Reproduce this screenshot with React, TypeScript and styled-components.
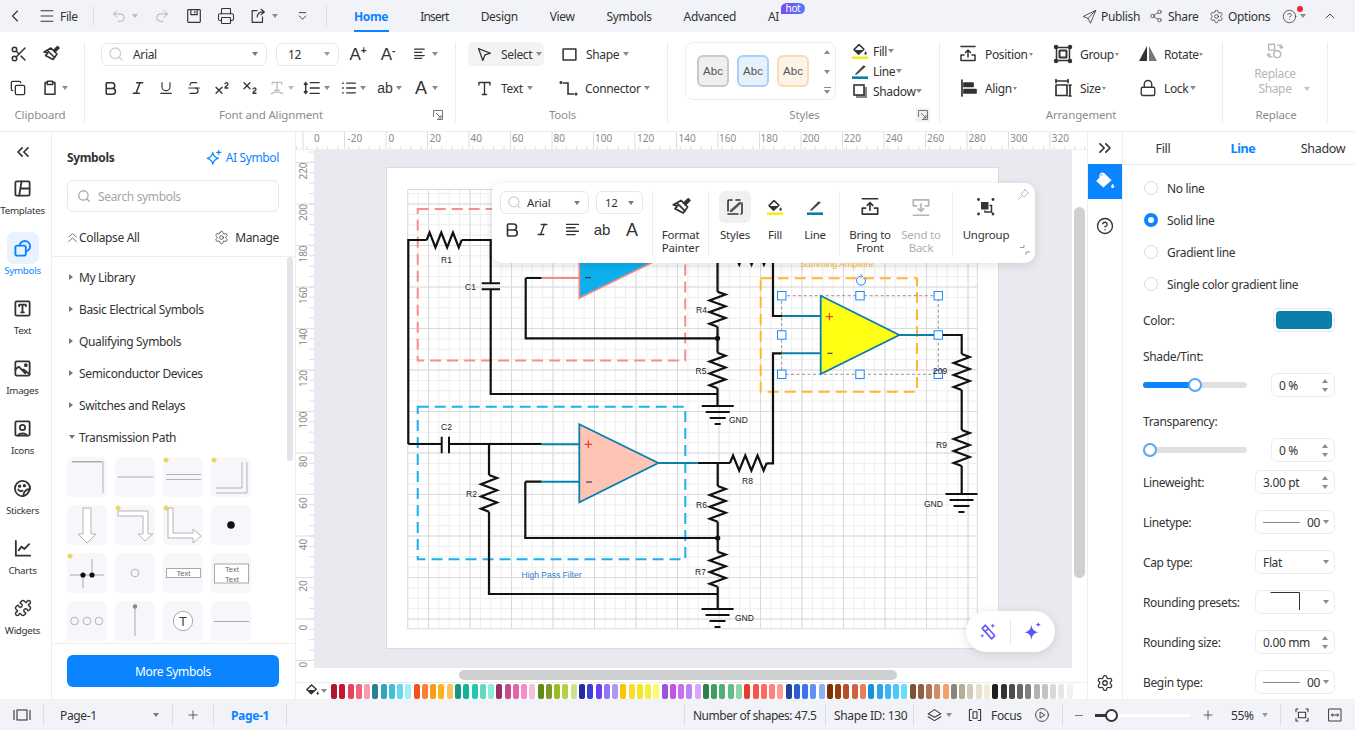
import React from "react";
import styled, { createGlobalStyle } from "styled-components";
import {
  ChevronLeft, ChevronUp, ChevronsLeft, ChevronsRight, Undo2, Redo2, Printer, Scissors, Copy, Search, Bold, Italic,
  Underline, Strikethrough, Superscript, Subscript, Plus, Minus, Settings, Share2, CircleHelp, Lock, Puzzle, Menu,
} from "lucide-react";

const FONT = `"Noto Sans", "Open Sans", sans-serif`;
const BLUE = "#0a84ff";
const INK = "#333";

const Global = createGlobalStyle`
  * { box-sizing: border-box; }
  html, body { margin: 0; padding: 0; overflow: hidden; background: #fff; }
  body { font-family: ${FONT}; font-size: 12px; letter-spacing: -0.35px; color: ${INK}; }
`;

const Shell = styled.div`display:flex;flex-direction:column;width:1355px;height:730px;overflow:hidden;`;

/* generic cells */
const Cell = styled.div<{ $w: number; $ml?: number; $start?: boolean }>`
  display:flex;align-items:center;justify-content:${p => (p.$start ? "flex-start" : "center")};flex:none;white-space:nowrap;
  width:${p => p.$w}px;margin-left:${p => p.$ml || 0}px;
`;
const CaretMark = styled.i<{ $ml?: number; $c?: string }>`
  flex:none;display:block;width:0;height:0;margin-left:${p => p.$ml || 0}px;
  border-left:3px solid transparent;border-right:3px solid transparent;border-top:4px solid ${p => p.$c || "#8b8b8b"};
`;
const Caret = ({ ml, c }: { ml?: number; c?: string }) => (
  <Cell $w={8} $ml={ml}><CaretMark $c={c} /></Cell>
);
const Ic = ({ s = 20, children, c = INK, sw = 1.5 }: { s?: number; children: React.ReactNode; c?: string; sw?: number }) => (
  <svg width={s} height={s} viewBox="0 0 20 20" fill="none" stroke={c} strokeWidth={sw} strokeLinecap="round" strokeLinejoin="round">{children}</svg>
);
const Glyph = styled.span<{ $size?: number; $c?: string }>`
  font-family:"Liberation Sans",sans-serif;font-size:${p => p.$size || 18}px;color:${p => p.$c || INK};line-height:1;letter-spacing:0;
  sup{font-size:10px;vertical-align:6px;line-height:0;font-weight:700;}
`;

/* top bar */
const TopBar = styled.header`display:flex;align-items:center;flex:none;height:32px;background:#f2f3f8;`;
const VSep = styled.span<{ $ml?: number; $h?: number }>`
  flex:none;width:1px;height:${p => p.$h || 20}px;background:#dedfe4;margin-left:${p => p.$ml || 0}px;
`;
const TabItem = styled.div<{ $on?: boolean; $tight?: boolean }>`
  position:relative;display:flex;align-items:center;height:32px;margin:0 16px;color:${p => (p.$on ? BLUE : INK)};font-weight:${p => (p.$on ? 700 : 400)};
  ${p => p.$tight && "letter-spacing:-0.8px;"}
  ${p => p.$on && `&::after{content:"";position:absolute;left:0;right:-1px;bottom:0;height:2px;background:${BLUE};}`}
`;
const HotBadge = styled.span`
  position:absolute;left:13px;top:3px;width:24px;height:11px;border-radius:6px 6px 6px 0;background:linear-gradient(90deg,#7d4bf2,#4c7df7);
  color:#fff;font-size:10px;line-height:10px;text-align:center;
`;
const TopRight = styled.div`display:flex;align-items:center;align-self:stretch;margin-left:auto;position:relative;`;
const RedDot = styled.span`position:absolute;left:216px;top:6px;width:6px;height:6px;border-radius:50%;background:#f5222d;`;

/* ribbon */
const Ribbon = styled.section`display:flex;flex:none;height:100px;background:#fff;border-bottom:1px solid #eee;padding-top:10px;`;
const Group = styled.div<{ $w: number; $noLine?: boolean }>`
  display:flex;flex-direction:column;flex:none;width:${p => p.$w}px;height:80px;
  ${p => !p.$noLine && "border-right:1px solid #ececec;"}
`;
const GroupBody = styled.div`flex:none;height:65px;display:flex;flex-direction:column;gap:10px;`;
const GroupBodyRow = styled.div`flex:none;height:65px;display:flex;`;
const GroupLabel = styled.div<{ $pl?: number; $pr?: number }>`
  display:grid;grid-template-columns:1fr auto 1fr;align-items:center;height:15px;color:#8c8c8c;letter-spacing:-0.15px;font-size:11.5px;
  padding-left:${p => p.$pl || 0}px;padding-right:${p => p.$pr || 0}px;
`;
const Launcher = styled.span<{ $on?: boolean; $mr: number }>`
  grid-column:3;justify-self:end;display:flex;margin-right:${p => p.$mr}px;width:14px;height:14px;align-items:center;justify-content:center;
  ${p => p.$on && "background:#f0f0f0;"}
`;
const LauncherIcon = () => (
  <svg width="10" height="10" viewBox="0 0 10 10" fill="none" stroke="#777" strokeWidth="1"><path d="M.5 7V.5H9.5V9.5H4M3 3L8 8M8 5V8H5" /></svg>
);
const Row = styled.div`display:flex;align-items:center;height:24px;flex:none;`;
const SelectBox = styled.div<{ $w: number; $ml?: number; $h?: number }>`
  display:flex;align-items:center;flex:none;width:${p => p.$w}px;height:${p => p.$h || 23}px;margin-left:${p => p.$ml || 0}px;
  border:1px solid #e8e8e8;border-radius:6px;padding:0 8px 0 6px;color:${INK};
`;
const SelectText = styled.span<{ $ml?: number }>`flex:1;margin-left:${p => p.$ml || 0}px;`;

const ToolGrid = styled.div<{ $cols: string; $ml: number }>`
  display:grid;grid-template-columns:${p => p.$cols};grid-auto-rows:24px;column-gap:0;row-gap:10px;margin-left:${p => p.$ml}px;
`;
const ToolItem = styled.div<{ $on?: boolean; $pad?: number; $gap?: number; $w?: number }>`
  display:flex;align-items:center;height:24px;padding-left:${p => p.$pad ?? 0}px;gap:${p => p.$gap ?? 8}px;border-radius:5px;white-space:nowrap;
  ${p => p.$w && `width:${p.$w}px;`}
  ${p => p.$on && "background:#f3f3f3;"}
  > svg{flex:none;}
`;
const MiniCaret = styled(CaretMark)`margin-left:-4px;`;
const ArrCaret = styled(CaretMark)`margin-left:-6px;border-left-width:2.5px;border-right-width:2.5px;border-top-width:3px;`;
const StyleBox = styled.div`
  display:flex;align-items:center;flex:none;margin-left:17px;width:151px;height:58px;border:1px solid #eee;border-radius:8px;padding-left:11px;gap:8px;
`;
const AbcTile = styled.div<{ $bg: string; $bd: string }>`
  flex:none;display:flex;align-items:center;justify-content:center;width:32px;height:32px;border-radius:6px;
  background:${p => p.$bg};border:2px solid ${p => p.$bd};color:#555;font-size:11.5px;font-family:"Liberation Sans",sans-serif;letter-spacing:0;
`;
const StyleArrows = styled.div`flex:none;margin-left:auto;width:16px;height:100%;display:flex;flex-direction:column;align-items:center;justify-content:space-between;padding:7px 0 5px;margin-right:0;`;
const UpMark = styled.i`display:block;width:0;height:0;border-left:3.5px solid transparent;border-right:3.5px solid transparent;border-bottom:4px solid #8b8b8b;`;
const DownMark = styled.i`display:block;width:0;height:0;border-left:3.5px solid transparent;border-right:3.5px solid transparent;border-top:4px solid #8b8b8b;`;
const MoreMark = styled(DownMark)`position:relative;&::before{content:"";position:absolute;left:-3.5px;top:-7px;width:7px;height:1px;background:#8b8b8b;}`;
const MiniList = styled.div`flex:none;margin-left:16px;display:flex;flex-direction:column;margin-top:-1px;`;
const MiniRow = styled.div`display:flex;align-items:center;height:20px;gap:5px;white-space:nowrap;`;
const ReplaceCol = styled.div`display:flex;flex-direction:column;align-items:center;height:65px;color:#b5b5b5;line-height:15px;text-align:center;`;
const ReplaceIconWrap = styled.div`height:24px;flex:none;`;
const ReplaceLine = styled.div`display:grid;grid-template-columns:1fr auto 1fr;width:100%;align-items:center;`;
const ReplaceCaret = styled(CaretMark)`margin-left:12px;`;
const Bucket = ({ bar }: { bar: string }) => (
  <svg width="16" height="16" viewBox="0 0 16 16" fill="none">
    <path d="M7 1.6L2 6.6L6.6 11.2L12 6.2Z" stroke="#333" strokeWidth="1.5" strokeLinejoin="round" />
    <path d="M2.6 7H11.6L6.6 11.2Z" fill="#333" />
    <path d="M13.6 8.2c.9 1.3 1.2 1.8 1.2 2.3a1.2 1.2 0 0 1-2.4 0c0-.5.3-1 1.2-2.3z" fill="#333" />
    <rect x="0" y="13.4" width="16" height="2.6" fill={bar} />
  </svg>
);
const Pen = ({ bar }: { bar: string }) => (
  <svg width="16" height="16" viewBox="0 0 16 16" fill="none">
    <path d="M2.6 11.6L11.6 2.2L13.8 3.4L5 11.6Z" fill="#444" />
    <rect x="0" y="13.4" width="16" height="2.6" fill={bar} />
  </svg>
);
const FrontIcon = ({ c = INK, down, s = 20 }: { c?: string; down?: boolean; s?: number }) => (
  <Ic s={s} c={c} sw={1.5}>
    {down ? <path d="M3 17.5H17M10 7V14M7.5 11.5L10 14L12.5 11.5M6 9H3V3.5H17V9H14" /> : <path d="M3 2.5H17M10 13V6M7.5 8.5L10 6L12.5 8.5M6 11H3V16.5H17V11H14" />}
  </Ic>
);
const GroupIcon = ({ s = 20 }: { s?: number }) => (
  <Ic s={s} sw={1.5}>
    <rect x="3.5" y="3.5" width="13" height="13" rx="0.5" />
    <rect x="6.5" y="6.5" width="7" height="7" rx="0.5" fill="#fff" strokeWidth={2} />
    <circle cx="3" cy="3" r="1.5" fill={INK} /><circle cx="17" cy="3" r="1.5" fill={INK} /><circle cx="3" cy="17" r="1.5" fill={INK} /><circle cx="17" cy="17" r="1.5" fill={INK} />
  </Ic>
);
const FormatBrush = ({ s = 20 }: { s?: number }) => (
  <Ic s={s} sw={1.6}>
    <path d="M10 4L16 10L12 15.5L4.5 11.5L7 9L3 8Z" fill="#fff" />
    <path d="M12.5 6.5L16.5 2.5L18 4L14 8" fill={INK} />
    <path d="M6.5 6.5L13.5 13.5" />
  </Ic>
);

/* body */
const Main = styled.main`display:flex;flex:1;min-height:0;`;
const LeftRail = styled.nav`display:flex;flex-direction:column;align-items:flex-start;flex:none;width:52px;border-right:1px solid #eee;`;
const RailTop = styled.div`height:40px;width:46px;flex:none;display:flex;align-items:center;justify-content:center;`;
const RailItem = styled.div<{ $on?: boolean }>`
  display:flex;flex-direction:column;align-items:center;flex:none;height:60px;width:45px;color:${p => (p.$on ? BLUE : INK)};
  font-size:9.8px;line-height:14px;letter-spacing:-0.3px;
`;
const RailIcon = styled.div<{ $on?: boolean }>`
  display:flex;align-items:center;justify-content:center;width:32px;height:32px;border-radius:7px;${p => p.$on && "background:#e8f3ff;"}
`;

const SymbolPanel = styled.aside`display:flex;flex-direction:column;flex:none;width:244px;border-right:1px solid #eee;`;
const SymHead = styled.div`flex:none;display:flex;align-items:center;justify-content:space-between;height:48px;padding:2px 16px 0 15px;`;
const SymTitle = styled.span`font-weight:700;`;
const AiLink = styled.span`display:flex;align-items:center;gap:3px;color:${BLUE};`;
const SearchBox = styled.div`
  flex:none;display:flex;align-items:center;gap:7px;margin:0 16px 0 15px;height:32px;border:1px solid #e8e8e8;border-radius:6px;padding-left:9px;color:#a6a6a6;
`;
const CollapseRow = styled.div`
  flex:none;display:flex;align-items:center;justify-content:space-between;height:45px;padding:6px 16px 0 15px;border-bottom:1px solid #eee;
`;
const CollapseSide = styled.span<{ $gap?: number }>`display:flex;align-items:center;gap:${p => p.$gap ?? 3}px;`;
const SymScroll = styled.div`flex:1;min-height:0;overflow:hidden;position:relative;padding:4px 0 0 15px;`;
const ScrollThumb = styled.div`position:absolute;right:2px;top:0;width:6px;height:204px;border-radius:3px;background:#e3e3e9;`;
const LibRow = styled.div`display:flex;align-items:center;height:32px;gap:4px;`;
const Arrow = styled.i<{ $open?: boolean }>`
  display:block;flex:none;width:0;height:0;margin-left:2px;
  ${p => (p.$open
    ? "border-left:3.5px solid transparent;border-right:3.5px solid transparent;border-top:4.5px solid #777;"
    : "border-top:3.5px solid transparent;border-bottom:3.5px solid transparent;border-left:4.5px solid #777;margin-right:2px;")}
`;
const TileGrid = styled.div`display:grid;grid-template-columns:repeat(4,40px);grid-auto-rows:40px;gap:8px;padding-top:4px;`;
const TileBox = styled.div`width:40px;height:40px;border-radius:6px;background:#f6f7fb;`;
const SymFoot = styled.div`flex:none;height:56px;border-top:1px solid #eee;padding:11px 16px 12px 15px;`;
const MoreBtn = styled.div`display:flex;align-items:center;justify-content:center;height:32px;border-radius:6px;background:${BLUE};color:#fff;`;

const Tile = ({ children, mark }: { children?: React.ReactNode; mark?: boolean }) => (
  <TileBox>
    <svg width="40" height="40" viewBox="0 0 40 40" fill="none" stroke="#b5b5b5" style={{ overflow: "visible", display: "block" }}>
      {children}
      {mark && <path d="M3 .5L5.5 3L3 5.5L.5 3Z" fill="#fbd84a" stroke="#c9a93a" strokeWidth=".5" />}
    </svg>
  </TileBox>
);
const TileText = styled.text`font-family:"Liberation Sans",sans-serif;font-size:7.5px;fill:#666;stroke:none;letter-spacing:0;`;

/* centre */
const CanvasCol = styled.section`display:flex;flex-direction:column;flex:none;width:791px;`;
const RulerWrap = styled.div`flex:none;height:18px;background:#fff;`;
const CanvasMid = styled.div`display:flex;flex:1;min-height:0;`;
const VRulerWrap = styled.div`flex:none;width:18px;background:#fff;overflow:hidden;`;
const Stage = styled.div`position:relative;flex:1;min-width:0;background:#e9e9ef;overflow:hidden;`;
const VBar = styled.div`flex:none;width:15px;background:#fff;padding:57px 2px 0;`;
const VThumb = styled.div`width:11px;height:371px;border-radius:6px;background:#cfd0d2;`;
const Page = styled.div`width:611px;height:480px;margin:18px 0 0 73px;background:#fff;box-shadow:0 0 0 1px #dcdcdf;`;
const HBar = styled.div`flex:none;height:15px;background:#fff;border-bottom:1px solid #eee;padding:2px 0 0 163px;`;
const HThumb = styled.div`width:438px;height:10px;border-radius:5px;background:#cfd0d2;`;
const ColorBar = styled.div`flex:none;height:16px;background:#fff;display:flex;align-items:center;`;
const FillCell = styled.div`flex:none;width:35px;display:flex;align-items:center;justify-content:flex-end;padding-right:4px;gap:1px;`;
const Swatches = styled.div`display:flex;gap:2.28px;`;
const Swatch = styled.i<{ $c: string }>`display:block;width:6px;height:15px;border-radius:2px;background:${p => p.$c};`;

/* floating toolbar */
const FloatBar = styled.div`
  position:absolute;left:178px;top:33px;width:543px;height:80px;display:flex;padding-top:8px;background:#fff;border-radius:10px;
  box-shadow:0 2px 10px rgba(0,0,0,.12);font-size:11.5px;letter-spacing:-0.22px;
`;
const FloatFont = styled.div`flex:none;width:160px;padding-left:8px;display:flex;flex-direction:column;gap:4px;`;
const FloatRow = styled.div`display:flex;align-items:center;height:23px;`;
const FloatSep = styled.span<{ $ml?: number }>`flex:none;width:1px;height:64px;background:#ececec;margin-left:${p => p.$ml || 0}px;`;
const FloatItem = styled.div<{ $w: number; $dim?: boolean; $ml?: number }>`
  flex:none;width:${p => p.$w}px;margin-left:${p => p.$ml || 0}px;display:flex;flex-direction:column;align-items:center;color:${p => (p.$dim ? "#b0b0b0" : INK)};
`;
const FloatIcon = styled.div<{ $on?: boolean }>`
  flex:none;width:32px;height:32px;display:flex;align-items:center;justify-content:center;border-radius:6px;${p => p.$on && "background:#f0f0f0;"}
`;
const FloatText = styled.div`margin-top:5px;line-height:13px;text-align:center;`;
const PinMark = styled.div`position:absolute;right:5px;top:5px;`;
const CornerMark = styled.div`position:absolute;right:5px;bottom:5px;`;
const AiPill = styled.div`
  position:absolute;right:17px;bottom:16px;width:89px;height:41px;border-radius:21px;background:#fff;box-shadow:0 2px 10px rgba(0,0,0,.12);
  display:flex;align-items:center;justify-content:space-around;padding:0 6px;
`;
const PillSep = styled.span`width:1px;height:24px;background:#e6e6e6;`;

/* right side */
const RightRail = styled.nav`display:flex;flex-direction:column;flex:none;width:36px;border-left:1px solid #eee;border-right:1px solid #eee;`;
const RRBtn = styled.div<{ $h: number; $on?: boolean }>`
  flex:none;display:flex;align-items:center;justify-content:center;height:${p => p.$h}px;${p => p.$on && `background:${BLUE};`}
`;
const RRBottom = styled(RRBtn)`margin-top:auto;`;
const RightPanel = styled.aside`flex:1;min-width:0;overflow:hidden;display:flex;flex-direction:column;`;
const PTabs = styled.div`flex:none;display:flex;height:33px;padding-top:1px;border-bottom:1px solid #eee;`;
const PTab = styled.div<{ $on?: boolean }>`
  flex:none;width:80px;display:flex;align-items:center;justify-content:center;font-size:12.5px;${p => p.$on && `color:${BLUE};font-weight:700;`}
`;
const PBody = styled.div`flex:1;min-height:0;overflow:hidden;padding:7px 20px 0;display:flex;flex-direction:column;`;
const RadioRow = styled.div`flex:none;display:flex;align-items:center;height:32px;gap:9px;padding-left:1px;`;
const Radio = styled.i<{ $on?: boolean }>`
  flex:none;display:block;width:14px;height:14px;border-radius:50%;
  ${p => (p.$on ? `background:#fff;border:4px solid ${BLUE};` : "border:1px solid #ddd;background:#fff;")}
`;
const FieldRow = styled.div<{ $mt?: number; $h?: number }>`
  flex:none;display:flex;align-items:center;justify-content:space-between;height:${p => p.$h || 24}px;margin-top:${p => p.$mt || 0}px;
`;
const ColorWell = styled.div`flex:none;width:62px;height:24px;padding:2px;border:1px solid #e8e8e8;border-radius:5px;`;
const ColorFill = styled.div`width:100%;height:100%;border-radius:4px;background:#0a7fae;`;
const Track = styled.div`position:relative;flex:none;width:104px;height:6px;border-radius:3px;background:#e0e0e0;`;
const TrackFill = styled.div<{ $pct: number }>`width:${p => p.$pct}%;height:100%;border-radius:3px;background:${BLUE};`;
const Knob = styled.i<{ $pct: number }>`
  position:absolute;top:-4px;left:calc(${p => p.$pct}% - 7px + ${p => (p.$pct ? 0 : 7)}px);display:block;width:14px;height:14px;border-radius:50%;background:#fff;border:2px solid #5aa6f5;
`;
const Field = styled.div<{ $w: number }>`
  flex:none;display:flex;align-items:center;width:${p => p.$w}px;height:24px;border:1px solid #ececec;border-radius:6px;padding:0 5px 0 7px;
`;
const FieldText = styled.span`flex:1;white-space:nowrap;`;
const SpinCol = styled.div`display:flex;flex-direction:column;gap:5px;flex:none;margin-right:1px;`;
const LineSample = styled.span<{ $w: number }>`flex:none;display:block;width:${p => p.$w}px;height:1px;background:#888;margin-right:7px;`;
const Spin = () => (<SpinCol><UpMark /><DownMark /></SpinCol>);

/* status */
const StatusBar = styled.footer`display:flex;align-items:center;flex:none;height:31px;padding-top:1px;background:#f2f3f8;`;
const PageTab = styled.span`color:${BLUE};font-weight:700;`;
const ShapeCount = styled.span`letter-spacing:-0.5px;`;
const ZoomTrack = styled.div`position:relative;flex:none;width:96px;height:3px;background:#fff;margin-left:10px;`;
const ZoomFill = styled.div`width:14px;height:3px;background:#333;`;
const ZoomKnob = styled.i`position:absolute;left:10px;top:-5px;display:block;width:13px;height:13px;border-radius:50%;background:#fff;border:2px solid #333;`;

/* drawing */
const hRes = (a: number, b: number, y: number, amp = 7.5) => {
  const w = b - a; const pts = [`${a},${y}`];
  for (let i = 0; i < 6; i++) pts.push(`${a + (w * (i + 0.5)) / 6},${y + (i % 2 ? amp : -amp)}`);
  pts.push(`${b},${y}`); return `M${pts.join("L")}`;
};
const vRes = (a: number, b: number, x: number, amp = 8) => {
  const w = b - a; const pts = [`${x},${a}`];
  for (let i = 0; i < 6; i++) pts.push(`${x + (i % 2 ? -amp : amp)},${a + (w * (i + 0.5)) / 6}`);
  pts.push(`${x},${b}`); return `M${pts.join("L")}`;
};
const ground = (cx: number, y: number) =>
  `M${cx - 16} ${y}H${cx + 16}M${cx - 12} ${y + 6}H${cx + 12}M${cx - 8} ${y + 12}H${cx + 8}M${cx - 3} ${y + 18}H${cx + 3}`;

const range = (from: number, to: number, step: number) => { const r: number[] = []; for (let v = from; v <= to + .01; v += step) r.push(v); return r; };
const DText = styled.text<{ $c?: string; $s?: number }>`
  font-family:"Liberation Sans",sans-serif;letter-spacing:0;font-size:${p => p.$s || 8.5}px;fill:${p => p.$c || "#222"};
`;
const handles: [number, number][] = [[781.7, 295.7], [860, 295.7], [938.3, 295.7], [781.7, 335], [938.3, 335], [781.7, 374.3], [860, 374.3], [938.3, 374.3]];
const Diagram = () => {
  const blue = "#0a7fae";
  const X0 = 407.75, X1 = 977.3, Y0 = 189.5, Y1 = 628.7;
  const vMinor = range(X0, X1, 10.375), hMinor = range(193.625, Y1, 10.375);
  const vMajor = range(428.5, X1, 41.5), hMajor = range(204, Y1, 41.5);
  return (
    <svg width="611" height="480" viewBox="387 168 611 480" fill="none" style={{ display: "block" }}>
      <g stroke="#eeeeee" strokeWidth="1">
        {vMinor.map(x => <line key={x} x1={x} x2={x} y1={Y0} y2={Y1} />)}
        {hMinor.map(y => <line key={y} y1={y} y2={y} x1={X0} x2={X1} />)}
      </g>
      <g stroke="#dadada" strokeWidth="1">
        {vMajor.map(x => <line key={x} x1={x} x2={x} y1={Y0} y2={Y1} />)}
        {hMajor.map(y => <line key={y} y1={y} y2={y} x1={X0} x2={X1} />)}
        <rect x={X0} y={Y0} width={X1 - X0} height={Y1 - Y0} />
      </g>
      <rect x="417.7" y="209" width="267.5" height="151.4" stroke="#f58f8f" strokeWidth="2" strokeDasharray="11 6" />
      <rect x="417.7" y="406.7" width="267.6" height="152.6" stroke="#1bb1ec" strokeWidth="2" strokeDasharray="11 6" />
      <rect x="760.7" y="278.3" width="156.3" height="113.4" stroke="#fdb92e" strokeWidth="2" strokeDasharray="11 6" />
      <g stroke="#111" strokeWidth="2.2" strokeLinejoin="miter">
        <path d="M408.3 444V240H426.7M461.7 240H490.7V283M490.7 289V394H717.5M408.3 444H441.7M449 444H541.7" />
        <path d={hRes(426.7, 461.7, 240)} />
        <path d="M481.7 283.3H500M481.7 289.3H500M441.7 436.7V453.3M449 436.7V453.3" strokeWidth="2" />
        <path d="M525.7 278H541.7M525.7 278V338.3H717.5" />
        <path d="M717.5 258V291.7M717.5 326.7V352.7M717.5 388.3V406" />
        <path d={vRes(291.7, 326.7, 717.5)} /><path d={vRes(352.7, 388.3, 717.5)} />
        <path d={hRes(730, 767, 257)} /><path d="M717.5 257H730M767 257H773V316H782M782 353.3H773V463.3H766.7" />
        <path d={ground(717.7, 406)} />
        <path d="M489 444V475M489 511.7V594H717.5" /><path d={vRes(475, 511.7, 489)} />
        <path d="M525.3 481.7H541.7M525.3 481.7V538H717.7" />
        <path d="M697.7 463H730M717.7 463V486M717.7 521.7V551.7M717.7 586.7V609" />
        <path d={hRes(730, 766.7, 463)} /><path d={vRes(486, 521.7, 717.7)} /><path d={vRes(551.7, 586.7, 717.7)} />
        <path d={ground(717.5, 609)} />
        <path d="M938 335H961.7V354M961.7 390V430M961.7 466V494" />
        <path d={vRes(354, 390, 961.7)} /><path d={vRes(430, 466, 961.7)} />
        <path d={ground(961.5, 494)} />
      </g>
      <circle cx="717.5" cy="338.3" r="2.6" fill="#111" /><circle cx="717.7" cy="538" r="2.6" fill="#111" />
      <path d="M579.3 220L659 259L579.3 298Z" fill="#0cb0ec" stroke="#f08a8a" strokeWidth="1.8" />
      <path d="M541.7 278H579" stroke="#f08a8a" strokeWidth="1.8" />
      <path d="M585 277.7H591" stroke="#222" strokeWidth="1" />
      <path d="M579.3 424.3L658.3 463L579.3 502.3Z" fill="#fec4b4" stroke={blue} strokeWidth="1.8" />
      <path d="M541.7 444.3H579M541.7 481.7H579M658.3 463H697.7" stroke={blue} strokeWidth="2" />
      <path d="M820.7 295.7L899.3 335L820.7 374Z" fill="#ffff14" stroke={blue} strokeWidth="1.8" />
      <path d="M782 316H820.7M782 353.3H820.7M899.3 335H938" stroke={blue} strokeWidth="2" />
      <path d="M584.7 444.3H592M588.3 440.6V448M825.7 316.7H833M829.3 313V320.4" stroke="#f0142d" strokeWidth="1" />
      <path d="M586 482H592M827.5 353.3H832.5" stroke="#222" strokeWidth="1" />
      <DText x="441" y="263">R1</DText>
      <DText x="465" y="290">C1</DText>
      <DText x="441" y="430">C2</DText>
      <DText x="466" y="497">R2</DText>
      <DText x="696" y="313">R4</DText>
      <DText x="695.5" y="374">R5</DText>
      <DText x="696" y="508">R6</DText>
      <DText x="695" y="575">R7</DText>
      <DText x="742" y="484">R8</DText>
      <DText x="936" y="448">R9</DText>
      <DText x="729" y="423">GND</DText>
      <DText x="735" y="621">GND</DText>
      <DText x="924" y="507">GND</DText>
      <DText x="521.5" y="577.5" $c="#2f7ed0">High Pass Filter</DText>
      <DText x="800" y="267" $c="#fdb92e" $s={8.8}>Summing Amplifire</DText>
      <rect x="781.7" y="295.7" width="156.6" height="78.6" stroke="#777" strokeWidth=".8" strokeDasharray="3 2.5" />
      {handles.map(([x, y]) => <rect key={`${x}-${y}`} x={x - 4.2} y={y - 4.2} width="8.4" height="8.4" fill="#fff" stroke="#1a86ff" strokeWidth="1" />)}
      <DText x="933" y="373.5">209</DText>
      <path d="M864.7 278A4.5 4.5 0 1 1 860.7 276.2M860.5 274.5L862.6 276.2L860.5 278" stroke="#1a86ff" strokeWidth="1" />
    </svg>
  );
};

const RulerText = styled.text`font-family:${FONT};font-size:10px;fill:#8c8a86;letter-spacing:0;`;
const HRuler = () => {
  const majors = range(303, 1087, 41.5);
  const minor = range(296.5, 1087, 10.375);
  const labels: [number, string][] = [[314, "0"], [347.5, "-20"], [388.5, "0"], [429.5, "20"], [470.5, "40"], [512, "60"], [553.5, "80"], [595, "100"], [637, "120"], [678.5, "140"]];
  range(719, 1060, 41.6).forEach((x, i) => labels.push([x, String(160 + i * 20)]));
  return (
    <svg width="791" height="18" viewBox="296 132 791 18" style={{ display: "block" }}>
      <g stroke="#dedede">
        {minor.map(x => <line key={x} x1={x} x2={x} y1={146} y2={150} />)}
        {majors.map(x => <line key={x} x1={x} x2={x} y1={132} y2={150} />)}
        <line x1="296" x2="1087" y1="149.5" y2="149.5" stroke="#eee" />
      </g>
      {labels.map(([x, t], i) => <RulerText key={i} x={x} y={142}>{t}</RulerText>)}
    </svg>
  );
};
const VRuler = () => {
  const majors = range(162.5, 668, 41.5), minor = range(152, 668, 10.375);
  const labels = range(0, 12, 1).map(i => ({ y: 171 + i * 41.5, t: String(220 - i * 20) }));
  return (
    <svg width="18" height="518" viewBox="296 150 18 518" style={{ display: "block" }}>
      <g stroke="#dedede">
        {minor.map(y => <line key={y} y1={y} y2={y} x1={309} x2={314} />)}
        {majors.map(y => <line key={y} y1={y} y2={y} x1={296} x2={314} />)}
      </g>
      {labels.map(l => (
        <RulerText key={l.y} x={303} y={l.y} textAnchor="middle" dominantBaseline="central" transform={`rotate(-90 303 ${l.y})`}>{l.t}</RulerText>
      ))}
    </svg>
  );
};

const COLORS = [
  "#a6192e", "#d0122f", "#e8415e", "#f5617f", "#f99bb0", "#287f96", "#35a3bf", "#3ec0dc", "#63d9ee", "#a5ecf7",
  "#f5511e", "#fb7f36", "#fd9a18", "#fdb318", "#fdc25a", "#139880", "#13b495", "#1ccbb0", "#65d6c1", "#8aeedd",
  "#9b2f62", "#c54b8c", "#e364ab", "#f78bcf", "#f4c2dc", "#5f8a14", "#7a9b24", "#9bbb22", "#b2d045", "#d2e08e",
  "#2129a9", "#3a3fd8", "#6c40ef", "#9476f2", "#ad98f5", "#fbc400", "#fbdc2d", "#f1e526", "#f8ed3c", "#fbfc75",
  "#9b55dd", "#c353e8", "#cd6cee", "#bb84f6", "#dba6fa", "#2d8049", "#3ca05a", "#52ae74", "#66bc87", "#90d3a8",
  "#ec3b2d", "#f6544d", "#fb6a63", "#fd8181", "#fb9c90", "#21439f", "#2e5bcf", "#3a72f0", "#6092f3", "#8ab0f5",
  "#7a3205", "#983c0a", "#b3502a", "#cf6240", "#e67f5d", "#1890dc", "#2ba4ef", "#40b4f7", "#48cbfc", "#66e0fc",
  "#7d5335", "#955e3e", "#b57350", "#d48c63", "#f3a06c", "#8a8578", "#b3ad9b", "#d0cbbb", "#e4dfcf", "#f0ecd8",
  "#1f1f1f", "#333333", "#4d4d4d", "#666666", "#808080", "#b3b3b3", "#c4c4c4", "#d9d9d9", "#e6e6e6", "#f2f2f2",
];

const Sparkle = ({ c, s = 18 }: { c: string; s?: number }) => (
  <svg width={s} height={s} viewBox="0 0 20 20" fill={c}>
    <path d="M9 3.5C9.6 8 11.5 10 16 10.8C11.5 11.5 9.6 13.5 9 18C8.4 13.5 6.5 11.5 2 10.8C6.5 10 8.4 8 9 3.5Z" />
    <path d="M15.5 1C15.7 2.6 16.4 3.3 18 3.5C16.4 3.7 15.7 4.4 15.5 6C15.3 4.4 14.6 3.7 13 3.5C14.6 3.3 15.3 2.6 15.5 1Z" />
  </svg>
);

const LIBS = ["My Library", "Basic Electrical Symbols", "Qualifying Symbols", "Semiconductor Devices", "Switches and Relays"];

export default function App() {
  return (
    <Shell>
      <Global />
      <TopBar>
        <Cell $w={30}><ChevronLeft size={20} strokeWidth={1.3} color={INK} /></Cell>
        <Cell $w={20} $ml={7}><Menu size={18} strokeWidth={1.3} color={INK} /></Cell>
        <Cell $w={17} $ml={3} $start>File</Cell>
        <VSep $ml={16} />
        <Cell $w={18} $ml={16}><Undo2 size={16} strokeWidth={1.3} color="#aaa" /></Cell>
        <Caret ml={3} c="#bbb" />
        <Cell $w={18} $ml={14}><Redo2 size={16} strokeWidth={1.3} color="#aaa" /></Cell>
        <Cell $w={20} $ml={13}>
          <Ic s={18} sw={1.3}><path d="M4 3H16A1 1 0 0 1 17 4V16A1 1 0 0 1 16 17H4A1 1 0 0 1 3 16V4A1 1 0 0 1 4 3ZM6.5 3V8.5H13.5V3M11 5V6.5" /></Ic>
        </Cell>
        <Cell $w={20} $ml={12}><Printer size={18} strokeWidth={1.4} color={INK} /></Cell>
        <Cell $w={20} $ml={12}>
          <Ic s={18} sw={1.3}><path d="M9 4H3.5V17H15V11M9 11C9.5 7.5 12 5.5 16 5.5M13.5 2.5L17 5.5L13.5 8.5" /></Ic>
        </Cell>
        <Caret ml={3} />
        <Cell $w={16} $ml={15}>
          <Ic s={11} sw={1.6}><path d="M4 3H16M4 9L10 15L16 9" /></Ic>
        </Cell>
        <VSep $ml={16} />
        <Cell $w={0} $ml={11} />
        <TabItem $on>Home</TabItem>
        <TabItem $tight>Insert</TabItem>
        <TabItem>Design</TabItem>
        <TabItem>View</TabItem>
        <TabItem>Symbols</TabItem>
        <TabItem>Advanced</TabItem>
        <TabItem>AI<HotBadge>hot</HotBadge></TabItem>
        <TopRight>
          <Cell $w={16}><Ic s={15} sw={1.1}><path d="M18 2L1.5 10L8 12.5L11 18.5ZM18 2L8 12.5" /></Ic></Cell>
          <Cell $w={41} $ml={4} $start>Publish</Cell>
          <Cell $w={16} $ml={6}><Share2 size={14} strokeWidth={1.2} color={INK} /></Cell>
          <Cell $w={31} $ml={4} $start>Share</Cell>
          <Cell $w={16} $ml={9}><Settings size={15} strokeWidth={1.2} color={INK} /></Cell>
          <Cell $w={44} $ml={4} $start>Options</Cell>
          <Cell $w={16} $ml={9}><CircleHelp size={15} strokeWidth={1.2} color={INK} /></Cell>
          <Caret ml={2} />
          <RedDot />
          <Cell $w={16} $ml={15}><ChevronUp size={16} strokeWidth={1.3} color={INK} /></Cell>
          <Cell $w={17} />
        </TopRight>
      </TopBar>

      <Ribbon>
        <Group $w={85}>
          <GroupBody>
            <Row>
              <Cell $w={20} $ml={9}><Scissors size={18} strokeWidth={2} color={INK} /></Cell>
              <Cell $w={20} $ml={12}><FormatBrush /></Cell>
            </Row>
            <Row>
              <Cell $w={20} $ml={8}><Copy size={16} strokeWidth={2} color={INK} /></Cell>
              <Cell $w={20} $ml={12}>
                <Ic s={18} sw={1.7}><path d="M7 4H4.5V17H15.5V4H13M7 2.5H13V6H7Z" /></Ic>
              </Cell>
              <Caret ml={1} />
            </Row>
          </GroupBody>
          <GroupLabel $pr={4}><span /><span>Clipboard</span></GroupLabel>
        </Group>

        <Group $w={371}>
          <GroupBody>
            <Row>
              <SelectBox $w={166} $ml={16}>
                <Search size={16} strokeWidth={2} color="#cfcfcf" />
                <SelectText $ml={9}>Arial</SelectText><CaretMark $c="#777" />
              </SelectBox>
              <SelectBox $w={63} $ml={9}>
                <SelectText $ml={5}>12</SelectText><CaretMark $c="#999" />
              </SelectBox>
              <Cell $w={20} $ml={9}><Glyph $size={17}>A<sup>+</sup></Glyph></Cell>
              <Cell $w={20} $ml={10}><Glyph $size={17}>A<sup>-</sup></Glyph></Cell>
              <Cell $w={18} $ml={14}><Ic s={16}><path d="M2 4H14M2 8H11M2 12H14M2 15.5H11" /></Ic></Cell>
              <Caret ml={1} />
            </Row>
            <Row>
              <Cell $w={20} $ml={15}><Bold size={17} strokeWidth={2.2} color={INK} /></Cell>
              <Cell $w={20} $ml={8}><Italic size={16} strokeWidth={2.2} color={INK} /></Cell>
              <Cell $w={20} $ml={8}><Underline size={16} strokeWidth={1.7} color={INK} /></Cell>
              <Cell $w={20} $ml={8}><Strikethrough size={16} strokeWidth={1.7} color={INK} /></Cell>
              <Cell $w={20} $ml={8}><Superscript size={18} strokeWidth={1.7} color={INK} /></Cell>
              <Cell $w={20} $ml={8}><Subscript size={18} strokeWidth={1.7} color={INK} /></Cell>
              <Cell $w={20} $ml={7}><Ic s={16} c="#bbb" sw={1.6}><path d="M4 5V3H16V5M10 3V13M7 13H13M3 17C7 15 13 15 17 17" /></Ic></Cell>
              <Caret c="#bbb" />
              <Cell $w={20} $ml={7}><Ic s={18} sw={1.6}><path d="M3 4V16M1.5 6L3 4L4.5 6M1.5 14L3 16L4.5 14M8 4H18M8 10H18M8 16H18" /></Ic></Cell>
              <Caret ml={1} />
              <Cell $w={16} $ml={10}><Ic s={16} sw={1.6}><path d="M2 4H3M7 4H18M2 10H3M7 10H18M2 16H3M7 16H18" /></Ic></Cell>
              <Caret ml={2} />
              <Cell $w={16} $ml={10}><Glyph $size={14}>ab</Glyph></Cell>
              <Caret ml={2} />
              <Cell $w={16} $ml={10}><Glyph $size={18}>A</Glyph></Cell>
              <Caret ml={2} />
            </Row>
          </GroupBody>
          <GroupLabel $pl={2}><span /><span>Font and Alignment</span><Launcher $mr={10}><LauncherIcon /></Launcher></GroupLabel>
        </Group>

        <Group $w={212}>
          <GroupBody>
            <ToolGrid $cols="85px 100px" $ml={12}>
              <ToolItem $on $pad={8} $w={76}>
                <Ic s={17}><path d="M3 3L17 8.5L10.5 10.5L8 17Z" /></Ic>Select<MiniCaret />
              </ToolItem>
              <ToolItem $pad={8}>
                <Ic s={17} sw={1.8}><rect x="2.5" y="3.5" width="15" height="13" /></Ic>Shape<MiniCaret />
              </ToolItem>
              <ToolItem $pad={8}>
                <Ic s={17} sw={1.6}><path d="M3.5 6V3H16.5V6M10 3V17M7.5 17H12.5" /></Ic>Text<MiniCaret />
              </ToolItem>
              <ToolItem $pad={6} $gap={7}>
                <svg width="19" height="17" viewBox="0 0 19 17" fill="none" stroke={INK} strokeWidth="1.6"><path d="M4 3H9V14H15" /><circle cx="2" cy="2.5" r="1.5" fill={INK} stroke="none" /><circle cx="17" cy="14" r="1.5" fill={INK} stroke="none" /></svg>
                Connector<MiniCaret />
              </ToolItem>
            </ToolGrid>
          </GroupBody>
          <GroupLabel $pl={2}><span /><span>Tools</span></GroupLabel>
        </Group>

        <Group $w={272}>
          <GroupBodyRow>
            <StyleBox>
              <AbcTile $bg="#efefef" $bd="#cacaca">Abc</AbcTile>
              <AbcTile $bg="#e6f1fc" $bd="#a9d1f7">Abc</AbcTile>
              <AbcTile $bg="#fdf3e9" $bd="#fadcb4">Abc</AbcTile>
              <StyleArrows><UpMark /><DownMark /><MoreMark /></StyleArrows>
            </StyleBox>
            <MiniList>
              <MiniRow><Bucket bar="#f5ee1a" />Fill<MiniCaret /></MiniRow>
              <MiniRow><Pen bar="#0a7fae" />Line<MiniCaret /></MiniRow>
              <MiniRow>
                <svg width="16" height="16" viewBox="0 0 16 16" fill="none"><rect x="4" y="4" width="11" height="11" fill="#888" /><rect x="2" y="2" width="10" height="10" fill="#fff" stroke="#333" strokeWidth="1.6" /></svg>
                Shadow<MiniCaret />
              </MiniRow>
            </MiniList>
          </GroupBodyRow>
          <GroupLabel $pl={2}><span /><span>Styles</span><Launcher $on $mr={9}><LauncherIcon /></Launcher></GroupLabel>
        </Group>

        <Group $w={283}>
          <GroupBody>
            <ToolGrid $cols="95px 85px 90px" $ml={18}>
              <ToolItem $gap={7}><FrontIcon />Position<ArrCaret /></ToolItem>
              <ToolItem $gap={7}><GroupIcon />Group<ArrCaret /></ToolItem>
              <ToolItem $gap={6}>
                <svg width="20" height="20" viewBox="0 0 20 20"><path d="M9 2V17H1Z" fill="#333" /><path d="M11 2V17H19Z" fill="#777" /></svg>
                Rotate<ArrCaret />
              </ToolItem>
              <ToolItem $gap={7}>
                <Ic sw={1.7}><path d="M4 2V18" /><rect x="6" y="5" width="9" height="3.5" fill={INK} /><rect x="6" y="11.5" width="12" height="3.5" fill={INK} /></Ic>
                Align<ArrCaret />
              </ToolItem>
              <ToolItem $gap={7}>
                <Ic sw={1.7}><path d="M3 3H15M3 1.5V4.5M15 1.5V4.5M17 7V18M16 7H18M16 18H18" /><rect x="3" y="7" width="11" height="10.5" /></Ic>
                Size<ArrCaret />
              </ToolItem>
              <ToolItem $gap={6}><Cell $w={20}><Lock size={18} strokeWidth={1.8} color={INK} /></Cell>Lock<MiniCaret /></ToolItem>
            </ToolGrid>
          </GroupBody>
          <GroupLabel><span /><span>Arrangement</span></GroupLabel>
        </Group>

        <Group $w={105}>
          <ReplaceCol>
            <ReplaceIconWrap>
              <Ic s={18} c="#b5b5b5" sw={1.5}><rect x="3" y="2.5" width="6.5" height="6.5" /><circle cx="12.5" cy="13.5" r="3.8" /><path d="M13 3.5H17V7M15.5 5.5L17 7L18.5 5.5M7 16.5H3V13M1.5 14.5L3 13L4.5 14.5" /></Ic>
            </ReplaceIconWrap>
            <div>Replace</div>
            <ReplaceLine><span /><span>Shape</span><ReplaceCaret $c="#c2c2c2" /></ReplaceLine>
          </ReplaceCol>
          <GroupLabel $pl={2}><span /><span>Replace</span></GroupLabel>
        </Group>
      </Ribbon>

      <Main>
        <LeftRail>
          <RailTop><ChevronsLeft size={20} strokeWidth={2} color={INK} /></RailTop>
          <RailItem>
            <RailIcon><Ic s={19} sw={1.9}><rect x="2.5" y="2.5" width="15" height="15" rx="1.5" /><path d="M9 2.5L6.5 17.5M8 10H17.5" /></Ic></RailIcon>Templates
          </RailItem>
          <RailItem $on>
            <RailIcon $on><Ic s={19} c={BLUE} sw={2}><rect x="2.5" y="7" width="11" height="10.5" rx="2" /><path d="M7 7A5.5 5.5 0 1 1 13.5 13" /></Ic></RailIcon>Symbols
          </RailItem>
          <RailItem>
            <RailIcon><Ic s={19} sw={1.9}><rect x="2.5" y="2.5" width="15" height="15" rx="1.5" /><path d="M6.5 7.5V6H13.5V7.5M10 6V14M8.5 14H11.5" /></Ic></RailIcon>Text
          </RailItem>
          <RailItem>
            <RailIcon><Ic s={19} sw={1.9}><rect x="2.5" y="2.5" width="15" height="15" rx="1.5" /><path d="M2.5 11L6 8L13 15M11 11L17.5 16" /><circle cx="13.5" cy="6.5" r="1" fill={INK} /></Ic></RailIcon>Images
          </RailItem>
          <RailItem>
            <RailIcon><Ic s={19} sw={1.9}><rect x="2.5" y="2.5" width="15" height="15" rx="1.5" /><circle cx="10" cy="9" r="2.8" /><path d="M5.5 17.5C6 14.5 14 14.5 14.5 17.5" /></Ic></RailIcon>Icons
          </RailItem>
          <RailItem>
            <RailIcon><Ic s={19} sw={1.9}><path d="M11 18A8 8 0 1 1 18 10.5C16 15 15 16.5 11 18ZM11 18C10.5 14 13 11 18 10.5" /><circle cx="7" cy="7.5" r=".8" fill={INK} /><circle cx="12" cy="7" r=".8" fill={INK} /><path d="M5.5 11C6.5 13 8.5 13 10 12.2" /></Ic></RailIcon>Stickers
          </RailItem>
          <RailItem>
            <RailIcon><Ic s={19} sw={1.9}><path d="M3 2V17.5H18M6 12L9 8L12 10.5L17 5.5" /></Ic></RailIcon>Charts
          </RailItem>
          <RailItem>
            <RailIcon><Puzzle size={18} strokeWidth={1.9} color={INK} /></RailIcon>Widgets
          </RailItem>
        </LeftRail>

        <SymbolPanel>
          <SymHead>
            <SymTitle>Symbols</SymTitle>
            <AiLink><Ic s={17} c={BLUE} sw={1.3}><path d="M8 4C8.6 8 10.5 10 14.5 11C10.5 12 8.6 14 8 18C7.4 14 5.5 12 1.5 11C5.5 10 7.4 8 8 4Z" /><path d="M15 1.5V6.5M12.5 4H17.5" /></Ic>AI Symbol</AiLink>
          </SymHead>
          <SearchBox><Search size={14} strokeWidth={2.2} color="#aaa" />Search symbols</SearchBox>
          <CollapseRow>
            <CollapseSide $gap={1}>
              <Ic s={11} c="#666" sw={1.6}><path d="M3 9L10 3L17 9M3 17L10 11L17 17" /></Ic>Collapse All
            </CollapseSide>
            <CollapseSide><Settings size={15} strokeWidth={1.2} color={INK} />&nbsp;Manage</CollapseSide>
          </CollapseRow>
          <SymScroll>
            <ScrollThumb />
            {LIBS.map(n => <LibRow key={n}><Arrow />{n}</LibRow>)}
            <LibRow><Arrow $open />Transmission Path</LibRow>
            <TileGrid>
              <Tile><path d="M5 5H36V36" stroke="#ccc" strokeWidth="1.5" /><path d="M5 4.5H35" stroke="#aaa" /></Tile>
              <Tile><path d="M3 20H38" stroke="#aaa" /></Tile>
              <Tile mark><path d="M3 17.5H38M3 22.5H38" /></Tile>
              <Tile mark><path d="M5 31H31V5M5 36H36V5" /></Tile>
              <Tile><path d="M16 3H24V29H29L20 38L11 29H16Z" fill="#fff" /></Tile>
              <Tile mark><path d="M3 11H28V29H23L30 36L38 29H33V6H3Z" fill="#fff" /></Tile>
              <Tile mark><path d="M5 3V33H30V38L38 31L30 24V28H10V3Z" fill="#fff" /></Tile>
              <Tile><circle cx="20" cy="20" r="3.8" fill="#111" stroke="none" /></Tile>
              <Tile mark><path d="M3 22H37M16 22V35M25 6V22" stroke="#aaa" /><circle cx="16" cy="22" r="2.6" fill="#111" stroke="none" /><circle cx="25" cy="22" r="2.6" fill="#111" stroke="none" /></Tile>
              <Tile><circle cx="20" cy="20" r="3.8" /></Tile>
              <Tile><rect x="3.5" y="15.5" width="34" height="9" fill="#fff" stroke="#aaa" /><TileText x="20.5" y="23" textAnchor="middle">Text</TileText></Tile>
              <Tile><rect x="3.5" y="11" width="34" height="19" fill="#fff" stroke="#aaa" /><TileText x="21" y="18.5" textAnchor="middle">Text</TileText><TileText x="21" y="28.5" textAnchor="middle">Text</TileText></Tile>
              <Tile><circle cx="7.5" cy="20" r="3.8" /><circle cx="20" cy="20" r="3.8" /><circle cx="32" cy="20" r="3.8" /></Tile>
              <Tile><path d="M20 5V35" stroke="#aaa" /><circle cx="20" cy="5.5" r="2.2" fill="#888" stroke="none" /></Tile>
              <Tile><circle cx="20" cy="20" r="9.7" fill="#fff" stroke="#aaa" /><TileText x="20" y="24.5" textAnchor="middle" style={{ fontSize: 13, fill: "#444" }}>T</TileText></Tile>
              <Tile><path d="M3 20.5H38" stroke="#aaa" /></Tile>
            </TileGrid>
          </SymScroll>
          <SymFoot><MoreBtn>More Symbols</MoreBtn></SymFoot>
        </SymbolPanel>

        <CanvasCol>
          <RulerWrap><HRuler /></RulerWrap>
          <CanvasMid>
            <VRulerWrap><VRuler /></VRulerWrap>
            <Stage>
              <Page><Diagram /></Page>
              <FloatBar>
                <FloatFont>
                  <FloatRow>
                    <SelectBox $w={89}>
                      <Search size={15} strokeWidth={2} color="#cfcfcf" />
                      <SelectText $ml={5}>Arial</SelectText><CaretMark $c="#777" />
                    </SelectBox>
                    <SelectBox $w={47} $ml={7}>
                      <SelectText $ml={2}>12</SelectText><CaretMark $c="#777" />
                    </SelectBox>
                  </FloatRow>
                  <FloatRow>
                    <Cell $w={20} $ml={2}><Bold size={18} strokeWidth={2.2} color={INK} /></Cell>
                    <Cell $w={20} $ml={10}><Italic size={15} strokeWidth={2.2} color={INK} /></Cell>
                    <Cell $w={20} $ml={10}><Ic s={17} sw={1.6}><path d="M3 4H17M3 8H13M3 12H17M3 16H13" /></Ic></Cell>
                    <Cell $w={20} $ml={10}><Glyph $size={15}>ab</Glyph></Cell>
                    <Cell $w={20} $ml={10}><Glyph $size={18}>A</Glyph></Cell>
                  </FloatRow>
                </FloatFont>
                <FloatSep />
                <FloatItem $w={55}>
                  <FloatIcon><FormatBrush s={22} /></FloatIcon>
                  <FloatText>Format<br />Painter</FloatText>
                </FloatItem>
                <FloatSep />
                <FloatItem $w={40} $ml={6}>
                  <FloatIcon $on>
                    <Ic s={20} sw={1.6}><path d="M7 3H4A1 1 0 0 0 3 4V14M3 17H13M17 6V16A1 1 0 0 1 16 17M11 3H15" /><path d="M6 14L15 6" strokeWidth={2.4} stroke="#555" /></Ic>
                  </FloatIcon>
                  <FloatText>Styles</FloatText>
                </FloatItem>
                <FloatItem $w={40}><FloatIcon><Bucket bar="#f5ee1a" /></FloatIcon><FloatText>Fill</FloatText></FloatItem>
                <FloatItem $w={40}><FloatIcon><Pen bar="#0a7fae" /></FloatIcon><FloatText>Line</FloatText></FloatItem>
                <FloatSep $ml={4} />
                <FloatItem $w={60}><FloatIcon><FrontIcon s={22} /></FloatIcon><FloatText>Bring to<br />Front</FloatText></FloatItem>
                <FloatItem $w={42} $dim><FloatIcon><FrontIcon s={22} c="#b5b5b5" down /></FloatIcon><FloatText>Send to<br />Back</FloatText></FloatItem>
                <FloatSep $ml={10} />
                <FloatItem $w={66}>
                  <FloatIcon>
                    <svg width="20" height="20" viewBox="0 0 20 20"><rect x="5" y="5" width="7.5" height="7.5" fill="#333" /><path d="M13.5 8.5H15.5V15H9V13.5" fill="none" stroke="#333" strokeWidth="1.5" /><g fill="#333"><circle cx="2.5" cy="2.5" r="1.4" /><circle cx="17" cy="2.5" r="1.4" /><circle cx="2.5" cy="17" r="1.4" /><circle cx="17" cy="17" r="1.4" /></g></svg>
                  </FloatIcon>
                  <FloatText>Ungroup</FloatText>
                </FloatItem>
                <PinMark>
                  <Ic s={13} c="#bbb" sw={1.4}><path d="M12 2L18 8L15 9L11 14L6 9L11 5ZM7.5 12.5L2.5 17.5" /></Ic>
                </PinMark>
                <CornerMark>
                  <svg width="10" height="10" viewBox="0 0 10 10" fill="none" stroke="#999"><path d="M0 2.5H4V0M10 7H6V10" /></svg>
                </CornerMark>
              </FloatBar>
              <AiPill>
                <Ic s={21} c="#6c5cf6" sw={1.6}><path d="M4 7L7 4L16 14L13 17ZM7 10L10 7" /><path d="M14 3V6M12.5 4.5H15.5M4 13V15M3 14H5" strokeWidth={1} /></Ic>
                <PillSep />
                <Sparkle c="#5a55f5" s={21} />
              </AiPill>
            </Stage>
            <VBar><VThumb /></VBar>
          </CanvasMid>
          <HBar><HThumb /></HBar>
          <ColorBar>
            <FillCell>
              <svg width="15" height="14" viewBox="0 0 16 15" fill="none"><path d="M7 1L2 6L6.6 10.6L12 5.6Z" stroke="#333" strokeWidth="1.5" /><path d="M2.6 6.5H11.6L6.6 10.6Z" fill="#333" /><path d="M13.6 8c.9 1.3 1.2 1.8 1.2 2.3a1.2 1.2 0 0 1-2.4 0c0-.5.3-1 1.2-2.3z" fill="#333" /></svg>
              <CaretMark />
            </FillCell>
            <Swatches>{COLORS.map((c, i) => <Swatch key={i} $c={c} />)}</Swatches>
          </ColorBar>
        </CanvasCol>

        <RightRail>
          <RRBtn $h={32}><ChevronsRight size={20} strokeWidth={2} color={INK} /></RRBtn>
          <RRBtn $h={35} $on>
            <svg width="22" height="22" viewBox="0 0 20 20" fill="none">
              <path d="M9 1.5L2 9L8.5 15L16 8.5Z" fill="#fff" />
              <path d="M5.5 6C5 3 7 1 9 2.5" stroke="#fff" strokeWidth="1.2" />
              <path d="M17 11.5c1 1.4 1.4 2 1.4 2.6a1.4 1.4 0 0 1-2.8 0c0-.6.4-1.2 1.4-2.6z" fill="#fff" />
            </svg>
          </RRBtn>
          <RRBtn $h={54}><CircleHelp size={18} strokeWidth={1.8} color={INK} /></RRBtn>
          <RRBottom $h={32}><Settings size={18} strokeWidth={1.7} color={INK} /></RRBottom>
        </RightRail>

        <RightPanel>
          <PTabs><PTab>Fill</PTab><PTab $on>Line</PTab><PTab>Shadow</PTab></PTabs>
          <PBody>
            <RadioRow><Radio />No line</RadioRow>
            <RadioRow><Radio $on />Solid line</RadioRow>
            <RadioRow><Radio />Gradient line</RadioRow>
            <RadioRow><Radio />Single color gradient line</RadioRow>
            <FieldRow $mt={8}><span>Color:</span><ColorWell><ColorFill /></ColorWell></FieldRow>
            <FieldRow $mt={8} $h={32}><span>Shade/Tint:</span></FieldRow>
            <FieldRow $mt={1}>
              <Track><TrackFill $pct={50} /><Knob $pct={50} /></Track>
              <Field $w={64}><FieldText>0 %</FieldText><Spin /></Field>
            </FieldRow>
            <FieldRow $mt={8} $h={32}><span>Transparency:</span></FieldRow>
            <FieldRow $mt={1}>
              <Track><Knob $pct={0} /></Track>
              <Field $w={64}><FieldText>0 %</FieldText><Spin /></Field>
            </FieldRow>
            <FieldRow $mt={8}><span>Lineweight:</span><Field $w={80}><FieldText>3.00 pt</FieldText><Spin /></Field></FieldRow>
            <FieldRow $mt={16}><span>Linetype:</span><Field $w={80}><LineSample $w={37} /><FieldText>00</FieldText><CaretMark /></Field></FieldRow>
            <FieldRow $mt={16}><span>Cap type:</span><Field $w={80}><FieldText>Flat</FieldText><CaretMark /></Field></FieldRow>
            <FieldRow $mt={16}>
              <span>Rounding presets:</span>
              <Field $w={80}>
                <FieldText><svg width="38" height="20" viewBox="0 0 38 20" fill="none" stroke="#333" style={{ display: "block" }}><path d="M7.5 .5H36.5V18" /></svg></FieldText>
                <CaretMark />
              </Field>
            </FieldRow>
            <FieldRow $mt={16}><span>Rounding size:</span><Field $w={80}><FieldText>0.00 mm</FieldText><Spin /></Field></FieldRow>
            <FieldRow $mt={16}><span>Begin type:</span><Field $w={80}><LineSample $w={37} /><FieldText>00</FieldText><CaretMark /></Field></FieldRow>
          </PBody>
        </RightPanel>
      </Main>

      <StatusBar>
        <Cell $w={22} $ml={11}>
          <svg width="18" height="12" viewBox="0 0 18 12" fill="none" stroke={INK} strokeWidth="1.1"><rect x="4" y="1" width="10" height="10" /><path d="M1 1V11M17 1V11" /></svg>
        </Cell>
        <VSep $ml={10} $h={22} />
        <Cell $w={40} $ml={16} $start>Page-1</Cell>
        <Caret ml={52} c="#777" />
        <VSep $ml={12} $h={22} />
        <Cell $w={20} $ml={10}><Plus size={14} strokeWidth={1.3} color={INK} /></Cell>
        <VSep $ml={10} $h={22} />
        <Cell $w={40} $ml={17} $start><PageTab>Page-1</PageTab></Cell>
        <VSep $ml={15} $h={22} />
        <VSep $ml={397} $h={22} />
        <Cell $w={122} $ml={8} $start><ShapeCount>Number of shapes: 47.5</ShapeCount></Cell>
        <VSep $ml={10} $h={22} />
        <Cell $w={71} $ml={8} $start>Shape ID: 130</Cell>
        <VSep $ml={8} $h={22} />
        <Cell $w={18} $ml={11}>
          <Ic s={17} sw={1.2}><path d="M10 3L17.5 8L10 12L2.5 8ZM2.5 11.5L10 16L17.5 11.5" /></Ic>
        </Cell>
        <Caret ml={2} />
        <Cell $w={16} $ml={14}>
          <Ic s={16} sw={1.3}><path d="M6 3H3V17H6M14 3H17V17H14" /><path d="M7.5 6H12.5V14H7.5Z" /></Ic>
        </Cell>
        <Cell $w={36} $ml={8} $start>Focus</Cell>
        <Cell $w={16} $ml={7}><Ic s={16} sw={1.1}><circle cx="10" cy="10" r="8" /><path d="M8 6.5L13.5 10L8 13.5Z" /></Ic></Cell>
        <VSep $ml={12} $h={22} />
        <Cell $w={12} $ml={10}><Minus size={13} strokeWidth={1.3} color={INK} /></Cell>
        <ZoomTrack><ZoomFill /><ZoomKnob /></ZoomTrack>
        <Cell $w={14} $ml={10}><Plus size={14} strokeWidth={1.3} color={INK} /></Cell>
        <Cell $w={26} $ml={16} $start>55%</Cell>
        <Caret ml={4} c="#999" />
        <VSep $ml={11} $h={22} />
        <Cell $w={16} $ml={13}>
          <Ic s={16} sw={1.3}><path d="M5 2.5H2.5V6M15 2.5H17.5V6M5 17.5H2.5V14M15 17.5H17.5V14" /><rect x="5.5" y="6.5" width="9" height="7" /></Ic>
        </Cell>
        <Cell $w={16} $ml={17}>
          <Ic s={16} sw={1.2}><rect x="2.5" y="2.5" width="15" height="15" /><path d="M5.5 10H14.5M7 8.5L5.5 10L7 11.5M13 8.5L14.5 10L13 11.5" /></Ic>
        </Cell>
      </StatusBar>
    </Shell>
  );
}
